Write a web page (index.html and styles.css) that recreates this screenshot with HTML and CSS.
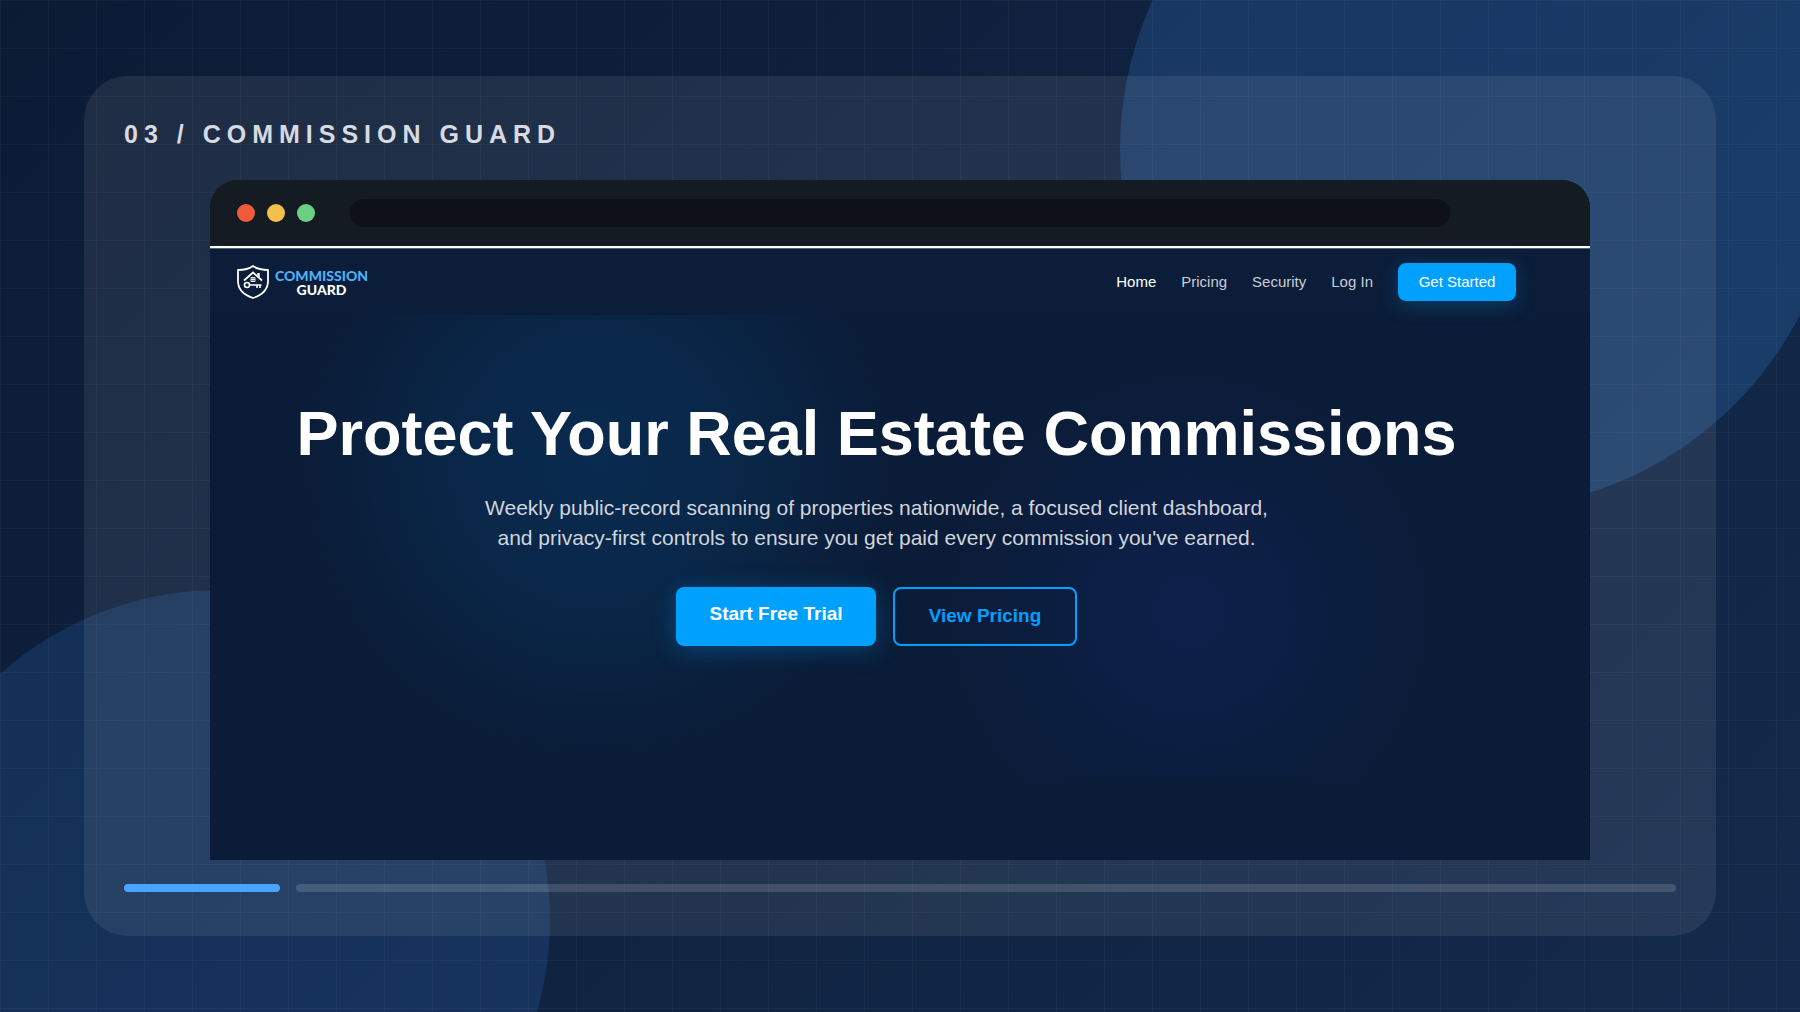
FILE: index.html
```
<!DOCTYPE html>
<html lang="en">
<head>
    <meta charset="UTF-8">
    <meta name="viewport" content="width=device-width, initial-scale=1.0">
    <title>Commission Guard</title>
    <link rel="stylesheet" href="styles.css">
</head>
<body>
    <div class="backdrop">
        <div class="circle circle-top"></div>
        <div class="circle circle-bottom"></div>
        <div class="grid-lines"></div>
    </div>

    <main class="card">
        <h2 class="card-title">03 / COMMISSION GUARD</h2>

        <div class="browser">
            <div class="browser-bar">
                <span class="dot red"></span>
                <span class="dot yellow"></span>
                <span class="dot green"></span>
                <div class="address"></div>
            </div>

            <div class="site">
                <header class="site-header">
                    <a href="#" class="logo">
                        <svg width="32" height="34" viewBox="0 0 32 34" fill="none" stroke="#fff">
                            <path d="M16 1 C12 4 6 5 1 5 V16 C1 24 7 30 16 33 C25 30 31 24 31 16 V5 C26 5 20 4 16 1 Z" stroke-width="1.8" stroke-linejoin="round"/>
                            <path d="M7 15.500 L16 7.500 L25 15.500" stroke-width="1.8"/>
                            <path d="M21.500 8 V12" stroke-width="2.4"/>
                            <path d="M14 12.500 h4 v4 h-4 z M16 12.500 v4 M14 14.500 h4" stroke-width="0.9"/>
                            <circle cx="10" cy="20" r="2.500" stroke-width="1.6"/>
                            <path d="M12.500 20 H24.500 M20 20 V23 M23 20 V23" stroke-width="1.6"/>
                        </svg>
                        <span class="logo-text">
                            <span class="blue">COMMISSION</span>
                            <span>GUARD</span>
                        </span>
                    </a>
                    <nav>
                        <a href="#" class="active">Home</a>
                        <a href="#">Pricing</a>
                        <a href="#">Security</a>
                        <a href="#">Log In</a>
                        <button type="button" class="get-started">Get Started</button>
                    </nav>
                </header>

                <section class="hero">
                    <h1>Protect Your Real Estate Commissions</h1>
                    <p>Weekly public-record scanning of properties nationwide, a focused client dashboard,<br>
                    and privacy-first controls to ensure you get paid every commission you've earned.</p>
                    <div class="buttons">
                        <button type="button" class="primary">Start Free Trial</button>
                        <button type="button" class="outline">View Pricing</button>
                    </div>
                </section>
            </div>
        </div>

        <div class="progress">
            <span class="progress-done"></span>
            <span class="progress-rest"></span>
        </div>
    </main>
</body>
</html>
```
FILE: styles.css
```
* {
    box-sizing: border-box;
}

body {
    margin: 0;
    min-height: 100vh;
    padding: 76px 84px;
    position: relative;
    font-family: "Liberation Sans", Arial, sans-serif;
    background: linear-gradient(135deg, #0b1b34 0%, #142a4c 100%);
}

/* background */
.backdrop {
    position: absolute;
    inset: 0;
    overflow: hidden;
}

.circle {
    position: absolute;
    border-radius: 50%;
}

.circle-top {
    width: 720px;
    height: 720px;
    top: -210px;
    right: -40px;
    background: rgba(50, 125, 205, 0.26);
}

.circle-bottom {
    width: 660px;
    height: 660px;
    left: -110px;
    bottom: -238px;
    background: rgba(50, 120, 205, 0.19);
}

.grid-lines {
    position: absolute;
    inset: 0;
    background-image:
        linear-gradient(rgba(255, 255, 255, 0.035) 1px, transparent 1px),
        linear-gradient(90deg, rgba(255, 255, 255, 0.035) 1px, transparent 1px);
    background-size: 48px 48px;
}

.card {
    position: relative;
    padding: 40px 40px 44px;
    border-radius: 44px;
    background: rgba(255, 255, 255, 0.08);
}

.card-title {
    margin: 0;
    padding: 2px 0 30px;
    font-size: 25px;
    line-height: 32px;
    letter-spacing: 6px;
    color: #d7dae0;
}

/* browser window */
.browser {
    margin: 0 86px;
    border-radius: 28px 28px 0 0;
    overflow: hidden;
    background: #0a1c37;
}

.browser-bar {
    display: flex;
    align-items: center;
    gap: 12px;
    height: 66px;
    padding: 0 140px 0 27px;
    background: #151b22;
}

.dot {
    width: 18px;
    height: 18px;
    border-radius: 50%;
}

.red {
    background: #f15b3b;
}

.yellow {
    background: #f3c04d;
}

.green {
    background: #6bd083;
}

.address {
    flex: 1;
    height: 28px;
    margin-left: 23px;
    border-radius: 14px;
    background: #0e1118;
}

/* website */
.site {
    border-top: 2px solid #fff;
    padding-bottom: 80px;
}

.site-header {
    display: flex;
    align-items: center;
    justify-content: space-between;
    height: 67px;
    padding: 0 74px 0 27px;
    border-top: 1px solid #5a6378;
    background: #0b1d38;
}

a {
    color: #c9ced6;
    text-decoration: none;
}

.logo {
    display: flex;
    align-items: center;
    gap: 6px;
}

.logo-text {
    display: flex;
    flex-direction: column;
    align-items: center;
    padding-top: 2px;
    font-family: Lato, sans-serif;
    font-size: 14px;
    line-height: 14px;
    font-weight: 900;
    color: #fff;
}

.blue {
    color: #4fb0f8;
}

nav {
    display: flex;
    align-items: center;
    gap: 25px;
    font-size: 15px;
}

nav a {
    padding-bottom: 2px;
}

nav .active {
    color: #fff;
}

button {
    font-family: inherit;
    border: none;
    border-radius: 8px;
    cursor: pointer;
}

.get-started {
    width: 118px;
    height: 38px;
    padding: 0 0 2px;
    font-size: 15px;
    color: #fff;
    background: #00a0ff;
    box-shadow: 0 4px 20px rgba(0, 160, 255, 0.25);
}

.hero {
    height: 465px;
    padding: 80px 47px 0 0;
    text-align: center;
    background:
        radial-gradient(circle at 28% 32%, rgba(0, 150, 255, 0.12), rgba(0, 150, 255, 0.09) 130px, transparent 300px),
        radial-gradient(circle at 71% 64%, rgba(40, 60, 210, 0.12), rgba(40, 60, 210, 0.08) 110px, transparent 240px);
}

h1 {
    margin: 0;
    font-size: 63px;
    line-height: 76px;
    color: #fff;
}

.hero p {
    margin: 22px 0 34px;
    font-size: 21px;
    line-height: 30px;
    color: #d0d5dc;
}

.buttons {
    display: flex;
    justify-content: center;
    gap: 17px;
}

.buttons button {
    height: 59px;
    font-size: 19px;
    font-weight: bold;
}

.primary {
    width: 200px;
    padding: 0 0 6px;
    color: #fff;
    background: #00a0ff;
    box-shadow: 0 4px 24px rgba(0, 160, 255, 0.3);
}

.buttons .outline {
    width: 184px;
    padding: 0 0 2px;
    color: #00a0ff;
    background: transparent;
    border: 2px solid #00a0ff;
}

/* progress */
.progress {
    display: flex;
    gap: 16px;
    margin-top: 24px;
}

.progress span {
    height: 8px;
    border-radius: 4px;
}

.progress-done {
    width: 156px;
    background: #4aa3ff;
}

.progress-rest {
    flex: 1;
    background: rgba(255, 255, 255, 0.14);
}
```
